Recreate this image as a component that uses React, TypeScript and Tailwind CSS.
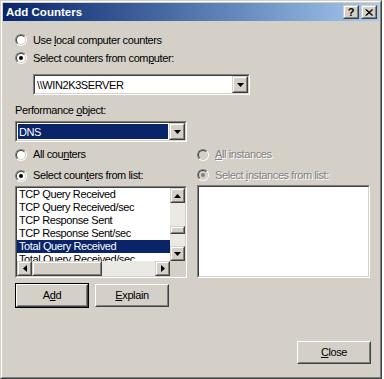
import React from 'react';

// Classic Win2k "Add Counters" dialog

const Sunken: React.FC<{ className?: string; inner?: string; children?: React.ReactNode }> = ({ className = '', inner = '', children }) => (
  <div className={`border border-t-[#808080] border-l-[#808080] border-r-white border-b-white ${className}`}>
    <div className={`h-full border border-t-[#404040] border-l-[#404040] border-r-[#d4d0c8] border-b-[#d4d0c8] ${inner}`}>
      {children}
    </div>
  </div>
);

const Raised: React.FC<{ className?: string; children?: React.ReactNode }> = ({ className = '', children }) => (
  <div className={`border border-t-[#d4d0c8] border-l-[#d4d0c8] border-r-[#404040] border-b-[#404040] ${className}`}>
    <div className="flex h-full items-center justify-center border border-t-white border-l-white border-r-[#808080] border-b-[#808080] bg-[#d4d0c8]">
      {children}
    </div>
  </div>
);

const Arrow: React.FC<{ dir: 'up' | 'down' | 'left' | 'right' }> = ({ dir }) => {
  const pts = {
    down: '0,0 7,0 3.5,4',
    up: '3.5,0 7,4 0,4',
    left: '4,0 4,7 0,3.5',
    right: '0,0 4,3.5 0,7',
  }[dir];
  const vertical = dir === 'up' || dir === 'down';
  return (
    <svg width={vertical ? 7 : 4} height={vertical ? 4 : 7} viewBox={vertical ? '0 0 7 4' : '0 0 4 7'}>
      <polygon points={pts} fill="#000" />
    </svg>
  );
};

const Radio: React.FC<{ checked?: boolean; disabled?: boolean }> = ({ checked, disabled }) => (
  <span className="flex h-[12px] w-[12px] shrink-0 rounded-full border border-t-[#808080] border-l-[#808080] border-r-white border-b-white">
    <span
      className={`flex h-full w-full items-center justify-center rounded-full border border-t-[#404040] border-l-[#404040] border-r-[#d4d0c8] border-b-[#d4d0c8] ${
        disabled ? 'bg-[#d4d0c8]' : 'bg-white'
      }`}
    >
      {checked && <span className={`h-[4px] w-[4px] rounded-full ${disabled ? 'bg-[#808080]' : 'bg-black'}`} />}
    </span>
  </span>
);

const RadioRow: React.FC<{ checked?: boolean; disabled?: boolean; h?: string; children: React.ReactNode }> = ({ checked, disabled, h = 'h-[18px]', children }) => (
  <div className={`flex ${h} items-center gap-[6px]`}>
    <Radio checked={checked} disabled={disabled} />
    <span className={disabled ? 'text-[#808080] [text-shadow:1px_1px_0_#fff]' : ''}>{children}</span>
  </div>
);

const PushButton: React.FC<{ isDefault?: boolean; className?: string; children: React.ReactNode }> = ({ isDefault, className = '', children }) => {
  const btn = (
    <div className="h-full border border-t-white border-l-white border-r-[#404040] border-b-[#404040]">
      <div className="flex h-full items-center justify-center border border-t-[#d4d0c8] border-l-[#d4d0c8] border-r-[#808080] border-b-[#808080]">
        <span>{children}</span>
      </div>
    </div>
  );
  return isDefault ? <div className={`border border-black ${className}`}>{btn}</div> : <div className={className}>{btn}</div>;
};

const counters = [
  'TCP Query Received',
  'TCP Query Received/sec',
  'TCP Response Sent',
  'TCP Response Sent/sec',
  'Total Query Received',
  'Total Query Received/sec',
];

export default function App() {
  return (
    <div className="h-[379px] w-[384px] bg-white font-['Liberation_Sans',Arial,sans-serif] text-[11px] leading-[13px] tracking-[-0.4px] text-black">
      <div className="h-[379px] w-[382px] border border-t-[#d4d0c8] border-l-[#d4d0c8] border-r-[#404040] border-b-[#404040]">
        <div className="flex h-full flex-col border border-t-white border-l-white border-r-[#808080] border-b-[#808080] bg-[#d4d0c8] p-[1px]">
          {/* Title bar */}
          <div className="flex h-[18px] items-center justify-between bg-gradient-to-r from-[#0a246a] to-[#a6caf0] pl-[3px] pr-[2px]">
            <span className="text-[11.5px] font-bold tracking-normal text-white">Add Counters</span>
            <div className="flex gap-[2px]">
              <Raised className="h-[14px] w-[16px]">
                <span className="text-[11px] font-bold leading-[11px] tracking-normal">?</span>
              </Raised>
              <Raised className="h-[14px] w-[16px]">
                <svg width="8" height="7" viewBox="0 0 8 7">
                  <path d="M0.5 0.5 L7 6.5 M1.5 0.5 L8 6.5 M7 0.5 L0.5 6.5 M8 0.5 L1.5 6.5" stroke="#000" strokeWidth="1" />
                </svg>
              </Raised>
            </div>
          </div>

          {/* Body */}
          <div className="flex flex-col pl-[12px] pr-[8px]">
            <div className="mt-[10px]">
              <RadioRow>
                Use <u>l</u>ocal computer counters
              </RadioRow>
              <RadioRow checked>
                Select counters from com<u>p</u>uter:
              </RadioRow>
            </div>

            <Sunken className="ml-[18px] mt-[7px] h-[21px] w-[217px]" inner="flex bg-white">
              <span className="flex-1 pl-[2px] pt-[3px]">\\WIN2K3SERVER</span>
              <Raised className="h-full w-[16px]">
                <Arrow dir="down" />
              </Raised>
            </Sunken>

            <div className="mt-[8px] flex h-[14px] items-center">
              <span>
                Performance <u>o</u>bject:
              </span>
            </div>

            <Sunken className="mt-[4px] h-[21px] w-[172px]" inner="flex bg-white">
              <div className="m-[1px] flex-1 bg-[#0a246a] pl-[1px] pt-[2px] text-white">DNS</div>
              <Raised className="h-full w-[16px]">
                <Arrow dir="down" />
              </Raised>
            </Sunken>

            <div className="mt-[2px] flex gap-[10px]">
              {/* Counters column */}
              <div className="flex w-[172px] flex-col">
                <RadioRow h="h-[21px]">
                  All cou<u>n</u>ters
                </RadioRow>
                <RadioRow checked h="h-[21px]">
                  Select coun<u>t</u>ers from list:
                </RadioRow>
                <Sunken className="h-[92px] w-[172px]" inner="flex flex-col bg-white">
                  <div className="flex h-[73px]">
                    <div className="flex-1 overflow-hidden">
                      {counters.map((c, i) => (
                        <div
                          key={c}
                          className={`h-[13px] whitespace-nowrap pl-[2px] leading-[13px] ${i === 4 ? 'bg-[#0a246a] text-white' : ''}`}
                        >
                          {c}
                        </div>
                      ))}
                    </div>
                    <div className="flex w-[15px] flex-col">
                      <Raised className="h-[15px]">
                        <Arrow dir="up" />
                      </Raised>
                      <div className="flex flex-1 flex-col bg-[#ebe9e4]">
                        <Raised className="mt-[23px] h-[8px]" />
                      </div>
                      <Raised className="h-[15px]">
                        <Arrow dir="down" />
                      </Raised>
                    </div>
                  </div>
                  <div className="flex h-[15px]">
                    <Raised className="w-[15px]">
                      <Arrow dir="left" />
                    </Raised>
                    <div className="flex flex-1 bg-[#ebe9e4]">
                      <Raised className="w-[70px]" />
                    </div>
                    <Raised className="w-[15px]">
                      <Arrow dir="right" />
                    </Raised>
                    <div className="w-[15px] bg-[#d4d0c8]" />
                  </div>
                </Sunken>
              </div>

              {/* Instances column */}
              <div className="flex w-[173px] flex-col">
                <RadioRow disabled h="h-[21px]">
                  <u>A</u>ll instances
                </RadioRow>
                <RadioRow checked disabled h="h-[20px]">
                  Select <u>i</u>nstances from list:
                </RadioRow>
                <Sunken className="h-[93px] w-[173px]" inner="bg-white" />
              </div>
            </div>

            <div className="mt-[5px] flex gap-[6px]">
              <PushButton isDefault className="h-[25px] w-[74px]">
                A<u>d</u>d
              </PushButton>
              <PushButton className="mt-[1px] h-[23px] w-[74px]">
                <u>E</u>xplain
              </PushButton>
            </div>

            <div className="mt-[33px] flex justify-end">
              <PushButton className="h-[23px] w-[74px]">
                <u>C</u>lose
              </PushButton>
            </div>
          </div>
        </div>
      </div>
    </div>
  );
}
